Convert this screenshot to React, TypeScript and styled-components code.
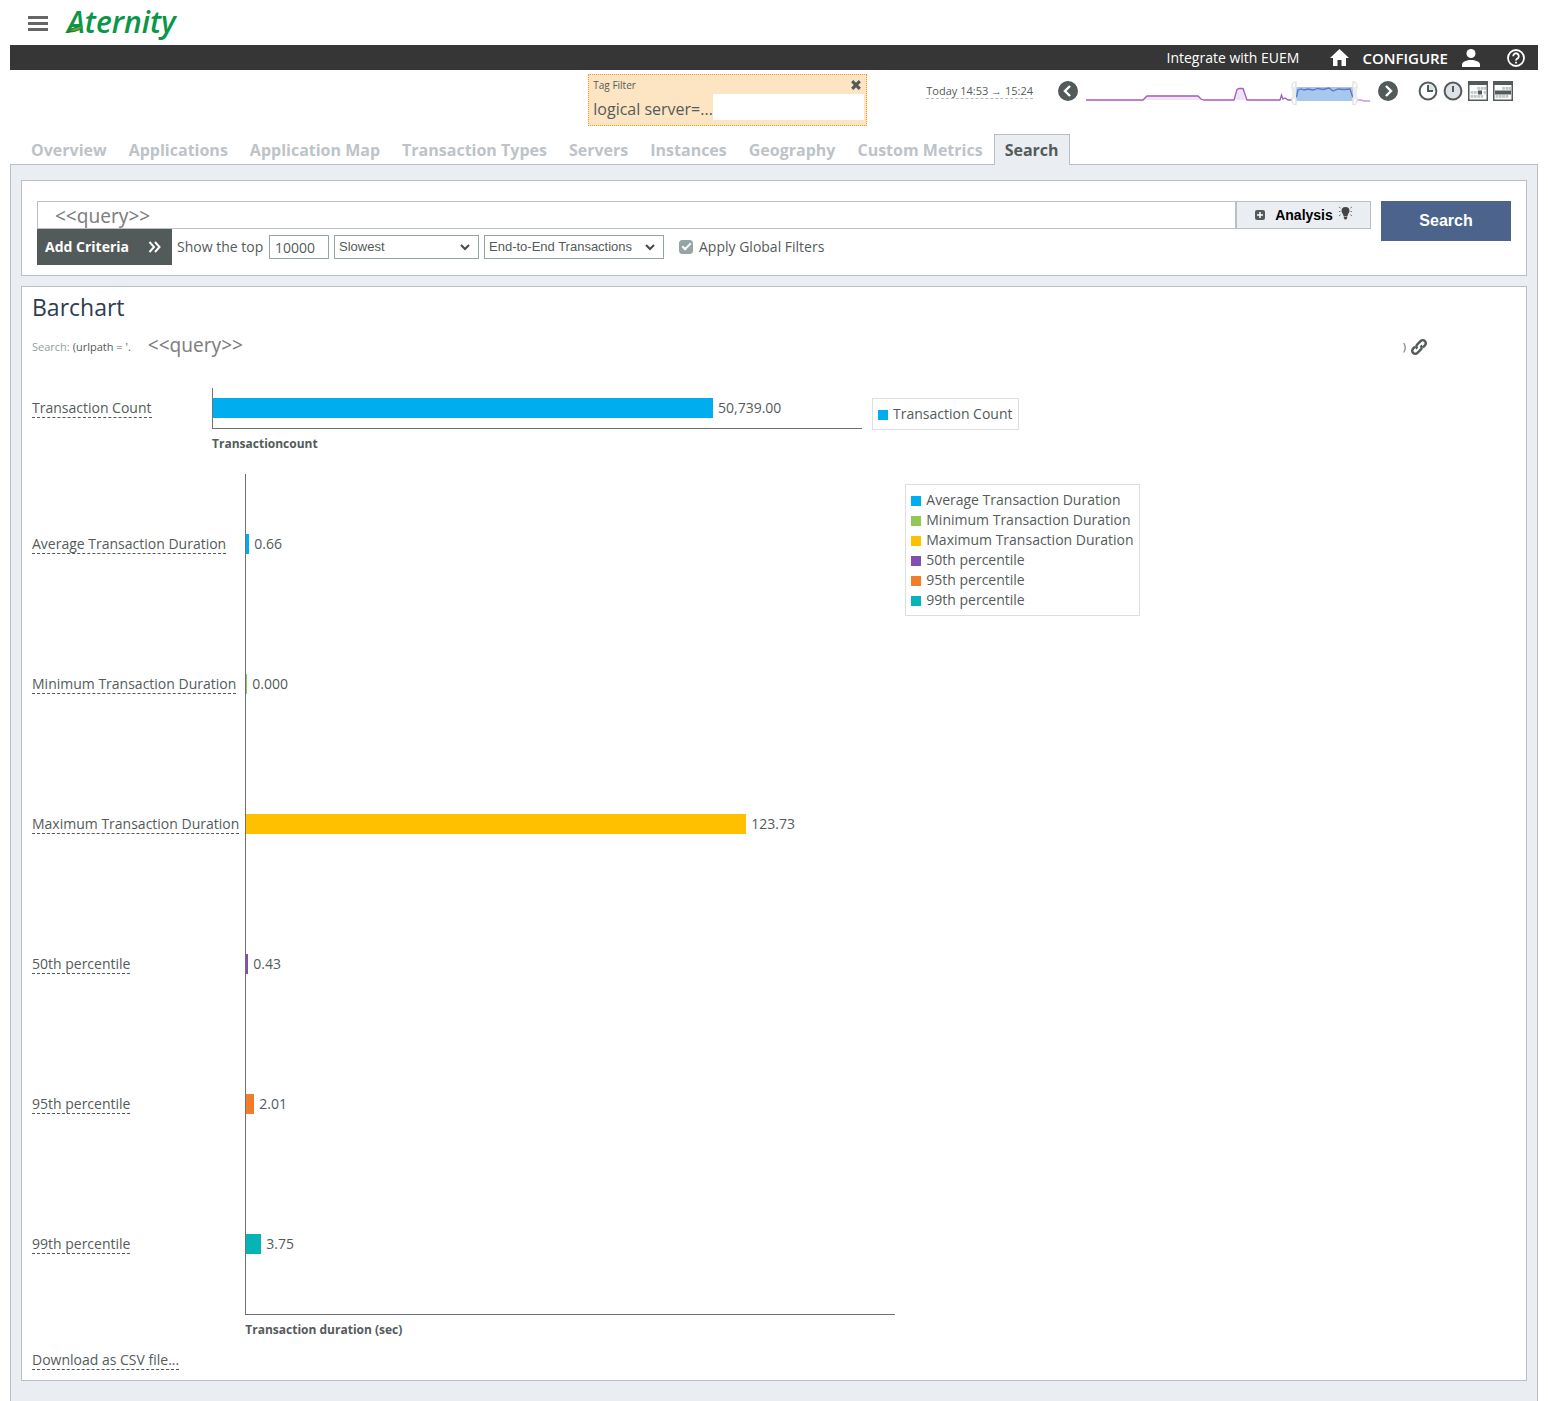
import React, { useState } from "react";
import styled, { createGlobalStyle } from "styled-components";

const color = {
  text: "#545b5b",
  slate: "#535b5a",
  line: "#babfc5",
  panel: "#eaeef2",
  control: "#95a5a6",
  bar: "#363636",
};

const GlobalStyle = createGlobalStyle`
  *, *::before, *::after { box-sizing: border-box; }
  body {
    margin: 0;
    background: #fff;
    color: ${color.text};
    font-family: "Open Sans", "Liberation Sans", sans-serif;
    font-size: 14px;
    line-height: 20px;
  }
  button, input, select { font: inherit; color: inherit; margin: 0; }
  svg { display: block; flex: none; }
`;

const Page = styled.div`
  min-height: 100vh;
  display: flex;
  flex-direction: column;
  padding: 0 10px;
`;

const IconButton = styled.button`
  border: 0;
  padding: 0;
  background: none;
  cursor: pointer;
  display: inline-flex;
`;

/* Header */
const Header = styled.header`
  height: 45px;
  display: flex;
  align-items: center;
  gap: 19px;
  padding: 2px 0 0 18px;
`;

const Brand = styled.a`
  position: relative;
  margin-bottom: 4px;
  color: #0a9648;
  font: italic 600 30px/40px "Open Sans", sans-serif;
  text-decoration: none;
`;

const Leaf = styled.svg`
  position: absolute;
  left: 0;
  top: 22px;
`;

const TopBar = styled.nav`
  height: 25px;
  background: ${color.bar};
  display: flex;
  align-items: center;
  justify-content: flex-end;
  padding-right: 13px;
  color: #fff;
`;

const TopLink = styled.a<{ $strong?: boolean }>`
  color: #fff;
  text-decoration: none;
  font-size: ${(p) => (p.$strong ? 15 : 14)}px;
  font-weight: ${(p) => (p.$strong ? 600 : 400)};
  margin-right: ${(p) => (p.$strong ? 14 : 31)}px;
`;

const TopIcon = styled(IconButton)<{ $after: number }>`
  color: #fff;
  margin-right: ${(p) => p.$after}px;
`;

/* Filter and time range */
const FilterRow = styled.div`
  height: 64px;
  display: flex;
  align-items: flex-start;
  justify-content: flex-end;
  padding: 4px 25px 0 0;
`;

const TagFilter = styled.section`
  width: 279px;
  height: 52px;
  margin-right: 59px;
  padding: 1px 2px 5px 4px;
  border: 1px dotted #f39c12;
  background: #fde4c2;
`;

const TagHead = styled.div`
  display: flex;
  align-items: center;
  justify-content: space-between;
  height: 18px;
  padding-right: 3px;
  font-size: 10px;
`;

const TagBody = styled.div`
  display: flex;
  height: 26px;
  font-size: 16px;
  line-height: 30px;
  white-space: nowrap;
`;

const TagValue = styled.input`
  flex: 1;
  min-width: 0;
  border: 0;
  background: #fff;
`;

const TimeRow = styled.div`
  height: 34px;
  display: flex;
  align-items: center;
`;

const TimeLink = styled.a`
  margin-right: 25px;
  border-bottom: 1px dashed #b4b8ba;
  color: ${color.text};
  font-size: 11px;
  line-height: 14px;
  text-decoration: none;
`;

const TimeTools = styled.div`
  display: flex;
  align-items: center;
  gap: 5px;
  margin-left: 20px;
`;

const Spark = styled.svg`
  margin: 0 8px;
`;

/* Tabs */
const Tabs = styled.nav`
  display: flex;
  padding-left: 10px;
  margin-bottom: -1px;
  z-index: 1;
`;

const Tab = styled.a<{ $active?: boolean }>`
  height: 31px;
  padding: 0 10px;
  border: 1px solid ${(p) => (p.$active ? color.line : "transparent")};
  border-bottom: 0;
  background: ${(p) => (p.$active ? color.panel : "transparent")};
  color: ${(p) => (p.$active ? color.slate : "#bdc3c7")};
  font-size: 16px;
  font-weight: 700;
  line-height: 30px;
  text-decoration: none;
  white-space: nowrap;
`;

const Panel = styled.main`
  flex: 1;
  display: flex;
  flex-direction: column;
  gap: 10px;
  padding: 15px 10px 20px;
  border: 1px solid ${color.line};
  border-bottom: 0;
  background: ${color.panel};
`;

const Card = styled.section`
  border: 1px solid ${color.line};
  background: #fff;
`;

/* Search form */
const SearchForm = styled.form`
  display: flex;
  align-items: flex-start;
  gap: 10px;
  padding: 20px 15px 10px;
`;

const SearchMain = styled.div`
  flex: 1;
  min-width: 0;
`;

const QueryRow = styled.div`
  display: flex;
  height: 28px;
`;

const QueryInput = styled.input`
  flex: 1;
  min-width: 0;
  padding: 2px 17px 0;
  border: 1px solid ${color.line};
  color: #7f7f7f;
  font-family: "Noto Sans", "Open Sans", sans-serif;
  font-size: 19px;
  line-height: 26px;
`;

const AnalysisButton = styled.button`
  width: 135px;
  display: flex;
  align-items: center;
  justify-content: center;
  padding: 0;
  border: 1px solid ${color.line};
  background: ${color.panel};
  color: #000;
  font: 700 14px/20px "Liberation Sans", Arial, sans-serif;
`;

const AnalysisText = styled.span`
  margin: 0 6px 0 10px;
`;

const SubmitButton = styled.button`
  width: 130px;
  height: 40px;
  border: 0;
  background: #4c648c;
  color: #fff;
  font: 700 16px/20px "Liberation Sans", Arial, sans-serif;
`;

const CriteriaRow = styled.div`
  display: flex;
  align-items: center;
  height: 36px;
  gap: 5px;
`;

const CriteriaButton = styled.button`
  width: 135px;
  height: 36px;
  display: flex;
  align-items: center;
  justify-content: space-between;
  padding: 0 11px 0 8px;
  border: 0;
  background: ${color.slate};
  color: #fff;
  font-weight: 700;
`;

const FieldLabel = styled.label`
  min-width: 87px;
  white-space: nowrap;
`;

const CountInput = styled.input`
  width: 60px;
  height: 24px;
  padding: 0 5px;
  border: 1px solid ${color.control};
  background: #fff;
`;

const SelectBox = styled.span<{ $width: number }>`
  position: relative;
  width: ${(p) => p.$width}px;
  height: 24px;
`;

const Select = styled.select`
  appearance: none;
  width: 100%;
  height: 100%;
  padding: 0 4px;
  border: 1px solid ${color.control};
  border-radius: 0;
  background: #fff;
  font: 13px/20px "Liberation Sans", Arial, sans-serif;
`;

const Chevron = styled.svg`
  position: absolute;
  right: 9px;
  top: 9px;
  pointer-events: none;
`;

const CheckLabel = styled.label`
  display: flex;
  align-items: center;
  gap: 6px;
  margin-left: 10px;
`;

const CheckInput = styled.input`
  appearance: none;
  display: grid;
  place-items: center;
  width: 14px;
  height: 14px;
  border: 1px solid ${color.control};
  border-radius: 3px;
  &:checked {
    background: ${color.control};
  }
  &:checked::after {
    content: "";
    width: 5px;
    height: 9px;
    margin-bottom: 3px;
    border: solid #fff;
    border-width: 0 2px 2px 0;
    rotate: 45deg;
  }
`;

/* Results */
const Results = styled(Card)`
  padding: 0 10px 10px;
`;

const Title = styled.h1`
  margin: 0;
  color: #2c3e50;
  font-size: 23px;
  font-weight: 400;
  line-height: 40px;
`;

const QueryLine = styled.div`
  display: flex;
  align-items: center;
  height: 40px;
  margin: 0 88px 21px 0;
  font-size: 11px;
`;

const Muted = styled.span`
  margin-right: 3px;
  color: #95a0a0;
`;

const QueryText = styled.span`
  flex: 1;
  margin: -5px 0 0 17px;
  color: #7f7f7f;
  font-family: "Noto Sans", "Open Sans", sans-serif;
  font-size: 19px;
`;

const ShareLink = styled.a`
  margin-left: 4px;
  color: ${color.slate};
`;

const Charts = styled.div`
  display: flex;
  flex-direction: column;
  gap: 20px;
  margin-bottom: 10px;
`;

const Chart = styled.section`
  display: grid;
  grid-template-columns: minmax(180px, max-content) 650px max-content;
  align-items: start;
`;

const Labels = styled.div`
  padding-right: 6px;
`;

const LabelRow = styled.div<{ $height: number }>`
  height: ${(p) => p.$height}px;
  display: flex;
  align-items: center;
`;

const DashedLink = styled.a`
  border-bottom: 1px dashed ${color.slate};
  color: ${color.text};
  line-height: 19px;
  text-decoration: none;
  white-space: nowrap;
`;

const Plot = styled.div`
  border-left: 1px solid #6e7171;
  border-bottom: 1px solid #6e7171;
`;

const BarRow = styled.div<{ $height: number }>`
  height: ${(p) => p.$height}px;
  display: flex;
  align-items: center;
  gap: 5px;
`;

const Bar = styled.div<{ $color: string }>`
  height: 20px;
  background: ${(p) => p.$color};
`;

const AxisTitle = styled.div`
  padding-top: 5px;
  font-size: 12px;
  font-weight: 700;
`;

const Legend = styled.ul`
  margin: 10px 0 0 10px;
  padding: 5px;
  border: 1px solid #dcdfe0;
  list-style: none;
`;

const LegendItem = styled.li`
  display: flex;
  align-items: center;
  gap: 5px;
  white-space: nowrap;
`;

const Swatch = styled.span<{ $color: string }>`
  width: 10px;
  height: 10px;
  margin-top: 2px;
  background: ${(p) => p.$color};
`;

type Metric = { name: string; value: number; shown: string; color: string };

const counts: Metric[] = [
  { name: "Transaction Count", value: 50739, shown: "50,739.00", color: "#00aeef" },
];

const durations: Metric[] = [
  { name: "Average Transaction Duration", value: 0.66, shown: "0.66", color: "#00aeef" },
  { name: "Minimum Transaction Duration", value: 0, shown: "0.000", color: "#92c955" },
  { name: "Maximum Transaction Duration", value: 123.73, shown: "123.73", color: "#ffc000" },
  { name: "50th percentile", value: 0.43, shown: "0.43", color: "#824eb0" },
  { name: "95th percentile", value: 2.01, shown: "2.01", color: "#f07c2c" },
  { name: "99th percentile", value: 3.75, shown: "3.75", color: "#04b4b6" },
];

const FULL_BAR = 500;

function BarChart({ data, rowHeight, axis }: { data: Metric[]; rowHeight: number; axis: string }) {
  const max = Math.max(...data.map((d) => d.value));
  return (
    <Chart>
      <Labels>
        {data.map((d) => (
          <LabelRow key={d.name} $height={rowHeight}>
            <DashedLink href="#">{d.name}</DashedLink>
          </LabelRow>
        ))}
      </Labels>
      <div>
        <Plot>
          {data.map((d) => (
            <BarRow key={d.name} $height={rowHeight}>
              <Bar
                $color={d.color}
                style={{ width: Math.max(1, Math.round((d.value / max) * FULL_BAR)) }}
              />
              {d.shown}
            </BarRow>
          ))}
        </Plot>
        <AxisTitle>{axis}</AxisTitle>
      </div>
      <Legend>
        {data.map((d) => (
          <LegendItem key={d.name}>
            <Swatch $color={d.color} />
            {d.name}
          </LegendItem>
        ))}
      </Legend>
    </Chart>
  );
}

function ArrowCircle({ d }: { d: string }) {
  return (
    <svg width="20" height="20" viewBox="0 0 20 20">
      <circle cx="10" cy="10" r="10" fill={color.slate} />
      <path d={d} fill="none" stroke="#fff" strokeWidth="2.4" />
    </svg>
  );
}

function ClockIcon({ hands, fill }: { hands: string; fill?: boolean }) {
  return (
    <svg width="20" height="20" viewBox="0 0 20 20">
      <circle cx="10" cy="10" r="8.4" fill={fill ? "#dde2e6" : "#fff"} stroke={color.slate} strokeWidth="2" />
      {!fill && <path d="M10 10V3a7 7 0 0 1 7 7z" fill="#dde2e6" />}
      <path d={hands} fill="none" stroke={color.slate} strokeWidth="2" />
    </svg>
  );
}

const calendarDots: [number, number][] = [
  [9.3, 6], [12.6, 6], [15.6, 6],
  [2.7, 10], [6, 10], [9.3, 10], [15.6, 10],
  [2.7, 14], [6, 14], [9.3, 14], [12.6, 14],
];

function CalendarIcon({ week }: { week?: boolean }) {
  return (
    <svg width="20" height="20" viewBox="0 0 20 20">
      <rect x=".75" y=".75" width="18.5" height="18.5" fill="#fff" stroke={color.slate} strokeWidth="1.5" />
      <rect width="20" height="4" fill={color.slate} />
      {calendarDots.map(([x, y]) => (
        <rect key={`${x}-${y}`} x={x} y={y} width="2.6" height="2.8" fill="#c0c5c7" />
      ))}
      {week ? (
        <rect x="2" y="9.500" width="16" height="4" fill={color.slate} />
      ) : (
        <rect x="10" y="9.500" width="4" height="4" fill={color.slate} />
      )}
    </svg>
  );
}

function Sparkline() {
  return (
    <Spark width="284" height="28" viewBox="0 0 284 28" role="img" aria-label="Traffic overview">
      <path d="M57 23l4-4.500h51l4 4.500zM148 23l4-12h6l3 12z" fill="#f0e4f4" />
      <path
        d="M0 23H57L61 19H112L115 22L118 23H148L151 12.500L153 11.500H157L161 23H194L195.500 18L197 22L199 21L202 23H208"
        fill="none"
        stroke="#a45cbc"
        strokeWidth="1.300"
      />
      <path d="M267 23h8l3 1h6" fill="none" stroke="#c49cd8" strokeWidth="1.600" />
      <rect x="210" y="10" width="57" height="14" fill="#a6c8ec" />
      <path
        d="M210 22l2-9 3-1 3 1 4-1 5 1 5-1.500 5 1 6-1.500 4 3 5-2 6 .5 6-.5 3 9"
        fill="none"
        stroke="#6472c8"
        strokeWidth="1.300"
      />
      <g fill="#fff" stroke="#e4e4e4" strokeWidth="1.500">
        <path d="M210 5a4 4 0 0 0-4 4v2h4zM210 28a4 4 0 0 1-4-4v-3h4zM267 5a4 4 0 0 1 4 4v2h-4zM267 28a4 4 0 0 0 4-4v-3h-4z" />
      </g>
      <path d="M206 10h4v12h-4zM267 10h4v12h-4z" fill="#ebebeb" />
    </Spark>
  );
}

function Dropdown({ label, options, width }: { label: string; options: string[]; width: number }) {
  return (
    <SelectBox $width={width}>
      <Select aria-label={label} defaultValue={options[0]}>
        {options.map((o) => (
          <option key={o}>{o}</option>
        ))}
      </Select>
      <Chevron width="10" height="7" viewBox="0 0 10 7">
        <path d="M1 1l4 4 4-4" fill="none" stroke="#444b4b" strokeWidth="2" />
      </Chevron>
    </SelectBox>
  );
}

const tabs = [
  "Overview",
  "Applications",
  "Application Map",
  "Transaction Types",
  "Servers",
  "Instances",
  "Geography",
  "Custom Metrics",
  "Search",
];

export default function App() {
  const [query, setQuery] = useState("<<query>>");
  const [global, setGlobal] = useState(true);

  return (
    <Page>
      <GlobalStyle />
      <Header>
        <IconButton aria-label="Menu">
          <svg width="20" height="15" viewBox="0 0 20 15" fill="#666">
            <path d="M0 0h20v3H0zM0 6h20v3H0zM0 12h20v3H0z" />
          </svg>
        </IconButton>
        <Brand href="#">
          Aternity
          <Leaf width="17" height="10" viewBox="0 0 17 10">
            <path d="M0 9C3 4 8 2 16 2C14 7 8 8 0 9z" fill="#2a7a2c" />
            <path d="M3 7C7 4 11 3 16 2C13 6 9 7 3 7z" fill="#5da53a" />
          </Leaf>
        </Brand>
      </Header>

      <TopBar>
        <TopLink href="#">Integrate with EUEM</TopLink>
        <TopIcon aria-label="Home" $after={13}>
          <svg width="19" height="17" viewBox="0 0 19 17" fill="currentColor">
            <path d="M9.500 0L19 9h-3v8h-4.500v-6h-4v6H3V9H0z" />
          </svg>
        </TopIcon>
        <TopLink href="#" $strong>
          CONFIGURE
        </TopLink>
        <TopIcon aria-label="Account" $after={27}>
          <svg width="18" height="18" viewBox="0 0 18 18" fill="currentColor">
            <circle cx="9" cy="4.500" r="4.500" />
            <path d="M0 18v-2.500C0 12.500 5 11 9 11s9 1.500 9 4.500V18z" />
          </svg>
        </TopIcon>
        <TopIcon aria-label="Help" $after={0}>
          <svg width="18" height="18" viewBox="0 0 18 18" fill="none" stroke="currentColor" strokeWidth="1.800">
            <circle cx="9" cy="9" r="8" />
            <path d="M6.200 7.200a2.800 2.800 0 1 1 4.400 2.200C9.500 10.200 9 10.500 9 11.600M9 12.700v1.900" />
          </svg>
        </TopIcon>
      </TopBar>

      <FilterRow>
        <TagFilter>
          <TagHead>
            Tag Filter
            <IconButton aria-label="Remove filter">
              <svg width="10" height="10" viewBox="0 0 10 10">
                <path d="M1.200 1.200l7.600 7.600M8.800 1.200L1.200 8.800" stroke={color.slate} strokeWidth="3.200" />
              </svg>
            </IconButton>
          </TagHead>
          <TagBody>
            <label htmlFor="tag">logical server=...</label>
            <TagValue id="tag" />
          </TagBody>
        </TagFilter>
        <TimeRow>
          <TimeLink href="#">Today 14:53 → 15:24</TimeLink>
          <IconButton aria-label="Earlier">
            <ArrowCircle d="M12 5L7 10l5 5" />
          </IconButton>
          <Sparkline />
          <IconButton aria-label="Later">
            <ArrowCircle d="M8 5l5 5-5 5" />
          </IconButton>
          <TimeTools>
            <IconButton aria-label="Last hour">
              <ClockIcon hands="M10 4v6h5" />
            </IconButton>
            <IconButton aria-label="Now">
              <ClockIcon hands="M10 5v6" fill />
            </IconButton>
            <IconButton aria-label="Day">
              <CalendarIcon />
            </IconButton>
            <IconButton aria-label="Week">
              <CalendarIcon week />
            </IconButton>
          </TimeTools>
        </TimeRow>
      </FilterRow>

      <Tabs>
        {tabs.map((t) => (
          <Tab key={t} href="#" $active={t === "Search"}>
            {t}
          </Tab>
        ))}
      </Tabs>

      <Panel>
        <Card>
          <SearchForm onSubmit={(e) => e.preventDefault()}>
            <SearchMain>
              <QueryRow>
                <QueryInput aria-label="Query" value={query} onChange={(e) => setQuery(e.target.value)} />
                <AnalysisButton type="button">
                  <svg width="10" height="10" viewBox="0 0 10 10">
                    <rect width="10" height="10" rx="2" fill={color.slate} />
                    <path d="M5 2v6M2 5h6" stroke="#fff" strokeWidth="1.500" />
                  </svg>
                  <AnalysisText>Analysis</AnalysisText>
                  <svg width="13" height="18" viewBox="0 0 13 18">
                    <path
                      d="M6.500 1a4 4 0 0 0-4 4c0 2 2 3 2 5h4c0-2 2-3 2-5a4 4 0 0 0-4-4zM4.700 10.600h3.600v1.200l-1 1.700H5.700l-1-1.700z"
                      fill="#444"
                    />
                    <path d="M0 1l1.500 1M0 5.500h1.500M0 10l1.700-1.500M13 1l-1.500 1M13 5.500h-1.500M13 10l-1.700-1.500" stroke="#777" />
                  </svg>
                </AnalysisButton>
              </QueryRow>
              <CriteriaRow>
                <CriteriaButton type="button">
                  Add Criteria
                  <svg width="13" height="12" viewBox="0 0 13 12">
                    <path d="M1.500 1l4.500 5-4.500 5M7 1l4.500 5L7 11" fill="none" stroke="#fff" strokeWidth="2" />
                  </svg>
                </CriteriaButton>
                <FieldLabel htmlFor="top">Show the top</FieldLabel>
                <CountInput id="top" defaultValue="10000" />
                <Dropdown label="Order" options={["Slowest"]} width={145} />
                <Dropdown label="Transaction kind" options={["End-to-End Transactions"]} width={180} />
                <CheckLabel>
                  <CheckInput type="checkbox" checked={global} onChange={(e) => setGlobal(e.target.checked)} />
                  Apply Global Filters
                </CheckLabel>
              </CriteriaRow>
            </SearchMain>
            <SubmitButton type="submit">Search</SubmitButton>
          </SearchForm>
        </Card>

        <Results>
          <Title>Barchart</Title>
          <QueryLine>
            <Muted>Search:</Muted>
            (urlpath = '.
            <QueryText>{query}</QueryText>
            )
            <ShareLink href="#" aria-label="Link to this search">
              <svg width="18" height="18" viewBox="0 0 18 18" fill="none" stroke="currentColor" strokeWidth="2.500">
                <path d="M7.300 10.700a3 3 0 0 1 0-4.300l3.300-3.300a3 3 0 0 1 4.300 4.300l-2 2" />
                <path d="M10.700 7.300a3 3 0 0 1 0 4.300l-3.300 3.300a3 3 0 0 1-4.300-4.300l2-2" />
              </svg>
            </ShareLink>
          </QueryLine>
          <Charts>
            <BarChart data={counts} rowHeight={40} axis="Transactioncount" />
            <BarChart data={durations} rowHeight={140} axis="Transaction duration (sec)" />
          </Charts>
          <DashedLink href="#">Download as CSV file...</DashedLink>
        </Results>
      </Panel>
    </Page>
  );
}
